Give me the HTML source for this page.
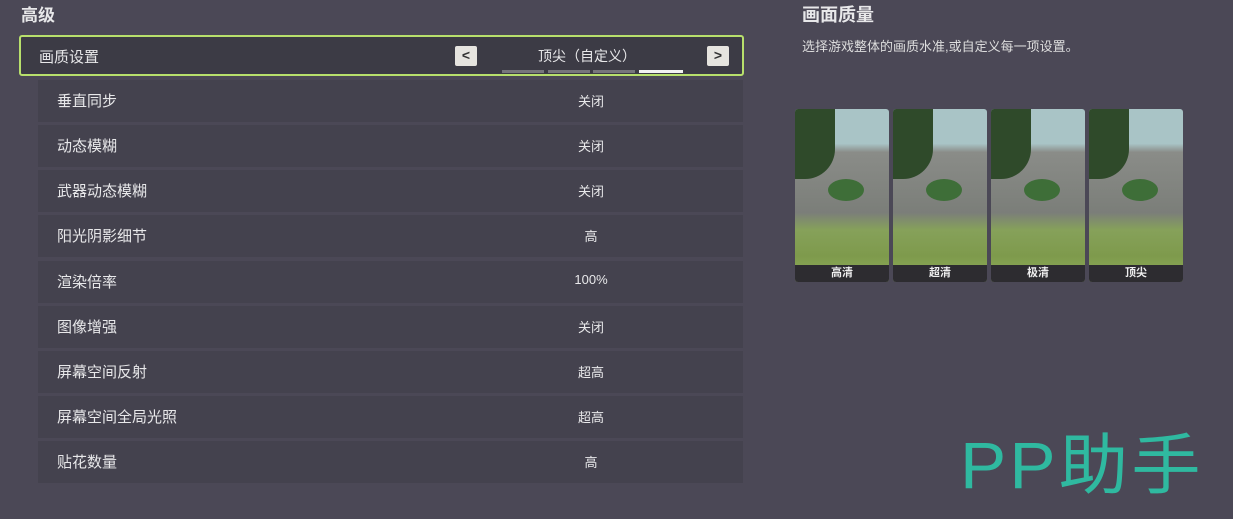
<!DOCTYPE html><html><head><meta charset="utf-8"><style>
body{margin:0;width:1233px;height:519px;background:#4b4856;font-family:"Liberation Sans","Noto Sans CJK SC",sans-serif;color:#e8e8ea;position:relative;overflow:hidden}
.a{position:absolute}
.row{position:absolute;left:38px;width:705px;height:42px;background:#44424e;font-size:15px}
.row .l{position:absolute;left:19px;top:10px}
.row .v{position:absolute;left:553px;width:0;top:11px;font-size:13px;display:flex;justify-content:center;white-space:nowrap}
.btn{position:absolute;top:9px;width:22px;height:20px;background:#e6e4df;border-radius:2px;color:#333;font-size:14px;text-align:center;line-height:19px;font-weight:bold}
.pic{position:absolute;top:109px;width:94px;height:173px;border-radius:3px;overflow:hidden;background:linear-gradient(#a9c4c6 0,#a9c4c6 20%,#8a8c88 25%,#7b7e79 60%,#86a15a 70%,#7e9a4c 85%,#90b05a 100%)}
.pic .t{position:absolute;left:0;top:0;width:40px;height:70px;background:#2f4a2a;border-radius:0 0 30px 0}
.pic .tr{position:absolute;left:33px;top:70px;width:36px;height:22px;background:#3e6e38;border-radius:50%}
.pic .lb{position:absolute;left:0;bottom:0;width:100%;height:17px;background:#2d2c30;font-size:11px;text-align:center;line-height:17px;font-weight:bold;color:#eee}
</style></head><body>
<div class="a" style="left:21px;top:1px;font-size:17px;font-weight:bold">高级</div>
<div class="a" style="left:19px;top:35px;width:721px;height:37px;border:2px solid #b8e06c;border-radius:3px;background:#3c3b45;font-size:15px">
<div class="a" style="left:18px;top:9px">画质设置</div>
<div class="btn" style="left:434px">&lt;</div>
<div class="a" style="left:517px;top:9px;font-size:14px">顶尖（自定义）</div>
<div class="btn" style="left:686px">&gt;</div>
<div class="a" style="left:481px;top:33px;width:42px;height:3px;background:#77767c"></div>
<div class="a" style="left:527px;top:33px;width:42px;height:3px;background:#77767c"></div>
<div class="a" style="left:572px;top:33px;width:42px;height:3px;background:#77767c"></div>
<div class="a" style="left:618px;top:33px;width:44px;height:3px;background:#f2f2f2"></div>
</div>
<div class="row" style="top:80px"><span class="l">垂直同步</span><span class="v">关闭</span></div>
<div class="row" style="top:125px"><span class="l">动态模糊</span><span class="v">关闭</span></div>
<div class="row" style="top:170px"><span class="l">武器动态模糊</span><span class="v">关闭</span></div>
<div class="row" style="top:215px"><span class="l">阳光阴影细节</span><span class="v">高</span></div>
<div class="row" style="top:261px"><span class="l">渲染倍率</span><span class="v">100%</span></div>
<div class="row" style="top:306px"><span class="l">图像增强</span><span class="v">关闭</span></div>
<div class="row" style="top:351px"><span class="l">屏幕空间反射</span><span class="v">超高</span></div>
<div class="row" style="top:396px"><span class="l">屏幕空间全局光照</span><span class="v">超高</span></div>
<div class="row" style="top:441px"><span class="l">贴花数量</span><span class="v">高</span></div>
<div class="a" style="left:802px;top:1px;font-size:18px;font-weight:bold">画面质量</div>
<div class="a" style="left:802px;top:36px;font-size:13px;color:#ddd">选择游戏整体的画质水准,或自定义每一项设置。</div>
<div class="pic" style="left:795px"><div class="t"></div><div class="tr"></div><div class="lb">高清</div></div>
<div class="pic" style="left:893px"><div class="t"></div><div class="tr"></div><div class="lb">超清</div></div>
<div class="pic" style="left:991px"><div class="t"></div><div class="tr"></div><div class="lb">极清</div></div>
<div class="pic" style="left:1089px"><div class="t"></div><div class="tr"></div><div class="lb">顶尖</div></div>
<div class="a" style="left:960px;top:430px;font-size:66px;color:#2fb9a0;letter-spacing:3px;line-height:70px;transform:scaleX(1.05);transform-origin:left">PP助手</div>
</body></html>
